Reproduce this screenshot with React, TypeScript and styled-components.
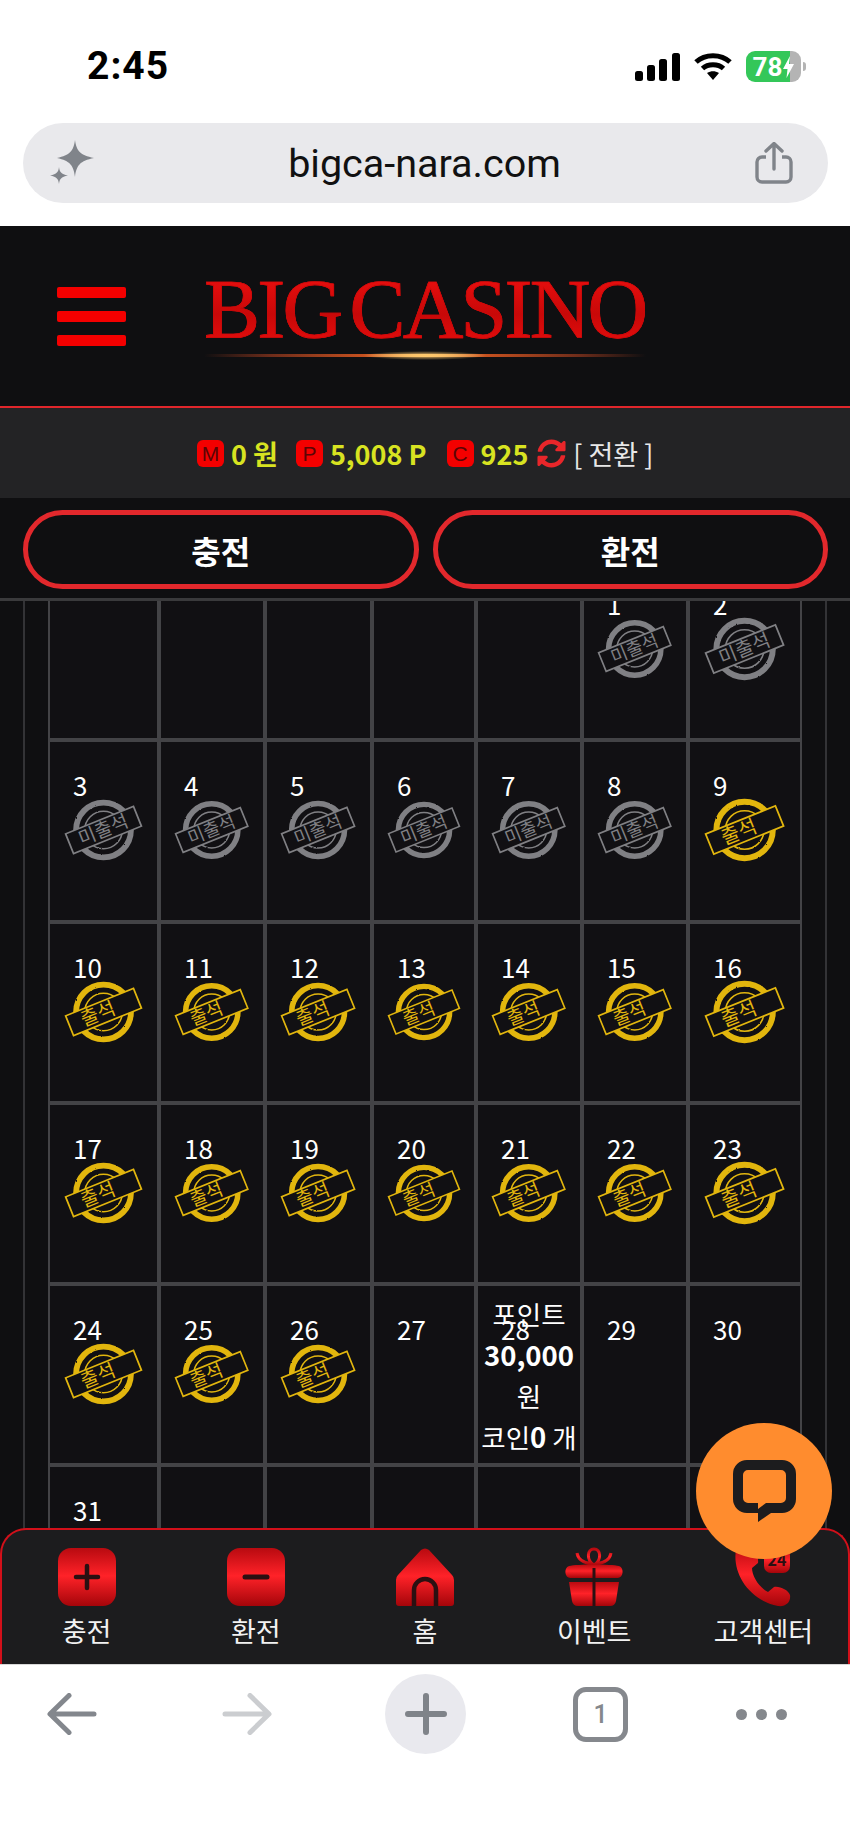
import React from "react";
import styled, { createGlobalStyle } from "styled-components";
import { FaSyncAlt } from "react-icons/fa";

const KR = `"Noto Sans CJK KR", "Noto Sans", sans-serif`;

const GlobalStyle = createGlobalStyle`
  html, body {
    margin: 0;
    padding: 0;
    background: #fff;
  }
  * {
    box-sizing: border-box;
  }
`;

const Page = styled.div`
  width: 850px;
  height: 1841px;
  display: flex;
  flex-direction: column;
  overflow: hidden;
  background: #fff;
  font-family: ${KR};
`;

/* phone chrome, top */
const StatusBar = styled.div`
  height: 123px;
  padding: 10px 49px 0 87px;
  display: flex;
  align-items: center;
  justify-content: space-between;
`;
const Time = styled.div`
  font-family: Roboto, sans-serif;
  font-weight: 700;
  font-size: 39px;
  line-height: 1;
  letter-spacing: 1px;
  color: #000;
`;
const StatusIcons = styled.div`
  display: flex;
  align-items: center;
  gap: 14px;
`;
const Battery = styled.div`
  position: relative;
  width: 55px;
  height: 31px;
  border-radius: 9px;
  background: linear-gradient(90deg, #34c759 0 80%, #b4b4b4 80% 100%);
  display: flex;
  align-items: center;
  justify-content: center;
  gap: 1px;
  color: #fff;
  font-family: Roboto, sans-serif;
  font-weight: 700;
  font-size: 26px;
  &::after {
    content: "";
    position: absolute;
    right: -5px;
    top: 11px;
    width: 3px;
    height: 9px;
    border-radius: 0 3px 3px 0;
    background: #b4b4b4;
  }
`;
const UrlBar = styled.div`
  height: 80px;
  margin: 0 22px 23px 23px;
  padding: 0 35px 0 27px;
  border-radius: 40px;
  background: #e9e9ec;
  display: flex;
  align-items: center;
  justify-content: space-between;
`;
const UrlText = styled.div`
  font-family: Roboto, sans-serif;
  font-size: 39.5px;
  color: #111;
`;

/* site header */
const Header = styled.header`
  height: 182px;
  padding: 0 0 0 57px;
  background: #0f0f11;
  border-bottom: 2px solid #e0262b;
  display: flex;
  align-items: flex-start;
  gap: 78px;
`;
const Burger = styled.div`
  margin-top: 61px;
  width: 69px;
  display: flex;
  flex-direction: column;
  gap: 13px;
`;
const BurgerBar = styled.span`
  display: block;
  height: 11px;
  border-radius: 2px;
  background: #f40000;
`;
const Logo = styled.div`
  margin-top: 42px;
  width: 442px;
  display: flex;
  flex-direction: column;
`;
const LogoText = styled.div`
  font-family: "Liberation Serif", serif;
  font-size: 84px;
  line-height: 84px;
  letter-spacing: -2.8px;
  word-spacing: -9px;
  white-space: nowrap;
  background: linear-gradient(180deg, #f01010 0%, #c80808 55%, #ea0e0e 100%);
  -webkit-background-clip: text;
  background-clip: text;
  color: transparent;
  -webkit-text-stroke: 0.7px #d40a0a;
`;
const LogoGlow = styled.div`
  position: relative;
  margin-top: 2px;
  height: 3px;
  background: linear-gradient(
    90deg,
    transparent 0%,
    #6d2c1a 15%,
    #c5501f 36%,
    #ffd27a 50%,
    #c5501f 64%,
    #6d2c1a 85%,
    transparent 100%
  );
  &::after {
    content: "";
    position: absolute;
    left: 160px;
    right: 160px;
    top: -3px;
    height: 9px;
    border-radius: 50%;
    background: radial-gradient(closest-side, #ffc76a, rgba(200, 80, 30, 0));
  }
`;

const BalanceBar = styled.div`
  height: 90px;
  padding-left: 197px;
  background: #232325;
  display: flex;
  align-items: center;
`;
const Badge = styled.span`
  width: 27px;
  height: 27px;
  border-radius: 6px;
  background: #f40000;
  color: #5a0505;
  font-family: "Liberation Sans", sans-serif;
  font-size: 21px;
  line-height: 27px;
  text-align: center;
`;
const Amount = styled.span<{ $gap: number }>`
  margin: 0 ${(p) => p.$gap}px 0 7px;
  color: #d8e321;
  font-size: 27px;
  font-weight: 700;
  line-height: 1;
  white-space: nowrap;
`;
const SwapLabel = styled.span`
  margin-left: 7px;
  color: #e8e8e8;
  font-size: 27px;
  line-height: 1;
  white-space: nowrap;
`;

const ActionRow = styled.div`
  height: 103px;
  padding: 12px 22px 0 23px;
  background: #0f0f11;
  border-bottom: 3px solid #3a3a3c;
  display: flex;
  gap: 14px;
`;
const ActionButton = styled.div`
  flex: 1;
  height: 79px;
  border: 5px solid #e2282c;
  border-radius: 40px;
  display: flex;
  align-items: center;
  justify-content: center;
  color: #fff;
  font-size: 32px;
  font-weight: 700;
`;

/* calendar, scrolled so the first week is cut by the top edge */
const Viewport = styled.div`
  position: relative;
  flex: 1;
  overflow: hidden;
  background: #0f0f11;
`;
const CalendarFrame = styled.div`
  height: 100%;
  margin: 0 23px;
  padding: 0 23px;
  border-left: 2px solid #333336;
  border-right: 2px solid #333336;
`;
const CalendarGrid = styled.div`
  margin-top: -40px;
  display: grid;
  grid-template-columns: 107px 102px 103px 100px 102px 102px 110px;
  grid-auto-rows: 177.25px;
  gap: 4px;
  background: #434346;
  border-left: 2px solid #434346;
  border-right: 2px solid #434346;
`;
const Cell = styled.div`
  position: relative;
  padding-top: 31px;
  background: #111013;
  display: flex;
  flex-direction: column;
`;
const DayNumber = styled.div`
  padding-left: 23px;
  height: 24px;
  color: #fff;
  font-size: 26px;
  line-height: 24px;
`;
const StampSvg = styled.svg`
  align-self: center;
  width: 72%;
  height: 66px;
  overflow: visible;
`;
const RewardOverlay = styled.div`
  position: absolute;
  inset: 0;
  display: flex;
  flex-direction: column;
  align-items: center;
  justify-content: center;
  color: #fff;
  font-size: 26.5px;
  line-height: 41px;
  white-space: nowrap;
`;
const Strong = styled.b`
  font-weight: 700;
  font-size: 27.5px;
`;

/* fixed bottom nav and chat bubble float above the calendar */
const BottomNav = styled.nav`
  position: absolute;
  left: 0;
  right: 0;
  bottom: 0;
  height: 136px;
  padding-top: 18px;
  border: 2px solid #d2101a;
  border-bottom: none;
  border-radius: 26px 26px 0 0;
  background: #1c1c1e;
  display: grid;
  grid-template-columns: repeat(5, 1fr);
`;
const NavItem = styled.div`
  display: flex;
  flex-direction: column;
  align-items: center;
  color: #f2f2f2;
  font-size: 27px;
  line-height: 1;
`;
const NavIcon = styled.svg`
  width: 58px;
  height: 58px;
  margin-bottom: 11px;
  overflow: visible;
`;
const HiddenDefs = styled.svg`
  position: absolute;
  width: 0;
  height: 0;
`;
const ChatButton = styled.div`
  position: absolute;
  right: 18px;
  bottom: 105px;
  width: 136px;
  height: 136px;
  border-radius: 50%;
  background: #ff8c2e;
  display: flex;
  align-items: center;
  justify-content: center;
`;

/* phone chrome, bottom */
const Toolbar = styled.div`
  height: 177px;
  padding: 9px 0 0 47px;
  border-top: 1px solid #d8d8d8;
  background: #fff;
  display: flex;
  align-items: flex-start;
`;
const ToolSlot = styled.div<{ $w: number; $left?: number }>`
  width: ${(p) => p.$w}px;
  height: 80px;
  margin-left: ${(p) => p.$left ?? 0}px;
  display: flex;
  align-items: center;
  justify-content: center;
`;
const PlusCircle = styled(ToolSlot)`
  border-radius: 50%;
  background: #e9e9ee;
`;
const TabCount = styled.div`
  width: 55px;
  height: 55px;
  border: 5px solid #85888d;
  border-radius: 13px;
  display: flex;
  align-items: center;
  justify-content: center;
  color: #85888d;
  font-family: Roboto, sans-serif;
  font-size: 25px;
  font-weight: 500;
`;
const Dots = styled.div`
  display: flex;
  gap: 9px;
`;
const Dot = styled.span`
  width: 11px;
  height: 11px;
  border-radius: 50%;
  background: #85888d;
`;

type StampKind = "absent" | "present";

const Stamp = ({ kind }: { kind: StampKind }) => {
  const color = kind === "present" ? "#e2b60e" : "#808084";
  return (
    <StampSvg viewBox="0 0 80 66">
      <g filter="url(#stampRough)">
        <circle cx="40" cy="33" r="28.5" fill="none" stroke={color} strokeWidth="6" />
        <circle cx="40" cy="33" r="19.5" fill="none" stroke={color} strokeWidth="1.6" />
      </g>
      <g transform="rotate(-22 40 33)">
        <rect x="2" y="22" width="76" height="22" fill="#111013" stroke={color} strokeWidth="1.8" />
        <text
          x={kind === "present" ? 34 : 40}
          y="39.5"
          textAnchor="middle"
          fill={color}
          fontFamily={KR}
          fontWeight="400"
          fontSize={kind === "present" ? 20 : 19.5}
        >
          {kind === "present" ? "출석" : "미출석"}
        </text>
      </g>
    </StampSvg>
  );
};

const days: (number | null)[] = [
  null, null, null, null, null,
  ...Array.from({ length: 31 }, (_, i) => i + 1),
  null, null, null, null, null, null,
];

const stampFor = (day: number): StampKind | null => {
  if (day <= 8) return "absent";
  if (day <= 26) return "present";
  return null;
};

const Sparkle = () => (
  <svg width="44" height="46" viewBox="0 0 44 46" fill="#80848a">
    <path d="M25 0 C26.5 11 30 15 44 18 C30 21 26.5 25 25 37 C23.5 25 20 21 7 18 C20 15 23.5 11 25 0Z" />
    <path d="M9 27 C9.6 32 11 34 18 35.5 C11 37 9.6 39 9 44 C8.4 39 7 37 0 35.5 C7 34 8.4 32 9 27Z" />
  </svg>
);

const ShareIcon = () => (
  <svg width="38" height="42" viewBox="0 0 38 42" fill="none" stroke="#80848a" strokeWidth="3.4">
    <path d="M11 15 H7 a5 5 0 0 0 -5 5 V35 a5 5 0 0 0 5 5 H31 a5 5 0 0 0 5 -5 V20 a5 5 0 0 0 -5 -5 H27" />
    <path d="M19 27 V2 M11 9 L19 1.5 L27 9" strokeLinecap="round" />
  </svg>
);

const SignalIcon = () => (
  <svg width="45" height="28" viewBox="0 0 45 28" fill="#000">
    <rect x="0" y="18" width="8" height="10" rx="2.5" />
    <rect x="12" y="12" width="8" height="16" rx="2.5" />
    <rect x="24" y="6" width="8" height="22" rx="2.5" />
    <rect x="37" y="0" width="8" height="28" rx="2.5" />
  </svg>
);

const WifiIcon = () => (
  <svg width="38" height="28" viewBox="0 0 38 28" fill="none" stroke="#000" strokeWidth="5">
    <path d="M2 9 C11 0.5 27 0.5 36 9" />
    <path d="M8.5 15.5 C14 10.5 24 10.5 29.5 15.5" />
    <path d="M13 20 L19 27 L25 20 C21 17.5 17 17.5 13 20Z" fill="#000" stroke="none" />
  </svg>
);

const BoltIcon = () => (
  <svg width="11" height="22" viewBox="0 0 11 22" fill="#fff">
    <path d="M7 0 L0 13 H4.5 L3.5 22 L11 8 H6 Z" />
  </svg>
);

const ChatIcon = () => (
  <svg width="63" height="62" viewBox="0 0 63 62" fill="#1c1c1e" fillRule="evenodd">
    <path d="M14 0 H49 A14 14 0 0 1 63 14 V39 A14 14 0 0 1 49 53 H38 L25 62 V53 H14 A14 14 0 0 1 0 39 V14 A14 14 0 0 1 14 0Z M15 10 H48 A5 5 0 0 1 53 15 V38 A5 5 0 0 1 48 43 H33 L25 49 V43 H15 A5 5 0 0 1 10 38 V15 A5 5 0 0 1 15 10Z" />
  </svg>
);

const shine = "url(#navShine)";
const dark = "#2a1012";

const PlusGlyph = () => (
  <NavIcon viewBox="0 0 58 58">
    <rect width="58" height="58" rx="13" fill={shine} />
    <path d="M29 18 V40 M18 29 H40" stroke={dark} strokeWidth="4.5" strokeLinecap="round" />
  </NavIcon>
);

const MinusGlyph = () => (
  <NavIcon viewBox="0 0 58 58">
    <rect width="58" height="58" rx="13" fill={shine} />
    <path d="M18 29 H40" stroke={dark} strokeWidth="5" strokeLinecap="round" />
  </NavIcon>
);

const HomeGlyph = () => (
  <NavIcon viewBox="0 0 58 58">
    <path
      d="M25 2 Q29 -1 33 2 L56 27 Q58 29 58 32 V55 Q58 58 55 58 H3 Q0 58 0 55 V32 Q0 29 2 27 Z"
      fill={shine}
    />
    <path d="M18 58 V42 a11 11 0 0 1 22 0 V58" fill="none" stroke={dark} strokeWidth="4.5" />
  </NavIcon>
);

const GiftGlyph = () => (
  <NavIcon viewBox="0 0 58 58">
    <path
      d="M29 17 C21 12 22 1 29 1 C36 1 37 12 29 17 M27 16 C18 15 13 11 12 5 M31 16 C40 15 45 11 46 5"
      fill="none"
      stroke={shine}
      strokeWidth="3"
    />
    <path d="M4 18 C12 16 46 16 54 18 C60 20 58 31 52 30 H6 C0 31 -2 20 4 18Z" fill={shine} />
    <path d="M4 34 H54 L51 53 Q50 58 45 58 H13 Q8 58 7 53 Z" fill={shine} />
    <path d="M29 20 V58" stroke={dark} strokeWidth="3" />
  </NavIcon>
);

const PhoneGlyph = () => (
  <NavIcon viewBox="0 0 58 58">
    <rect x="30" y="0" width="26" height="25" rx="7" fill={shine} />
    <text x="43" y="18" textAnchor="middle" fontSize="16" fontWeight="700" fontFamily={KR} fill={dark}>
      24
    </text>
    <path
      d="M2 2 C-2 24 14 52 44 58 C52 59 57 54 56 47 C54 42 46 38 40 39 L34 44 C26 40 18 29 18 20 L24 15 C25 8 20 -2 10 -3 C6 -3 3 -1 2 2Z"
      fill={shine}
    />
  </NavIcon>
);

const navItems = [
  { label: "충전", icon: <PlusGlyph /> },
  { label: "환전", icon: <MinusGlyph /> },
  { label: "홈", icon: <HomeGlyph /> },
  { label: "이벤트", icon: <GiftGlyph /> },
  { label: "고객센터", icon: <PhoneGlyph /> },
];

const App: React.FC = () => {
  return (
    <Page>
      <GlobalStyle />
      <HiddenDefs>
        <defs>
          <filter id="stampRough" x="-5%" y="-5%" width="110%" height="110%">
            <feTurbulence type="fractalNoise" baseFrequency="0.3" numOctaves="2" seed="4" />
            <feDisplacementMap in="SourceGraphic" scale="1.8" />
          </filter>
          <linearGradient id="navShine" x1="0" y1="0" x2="0" y2="1">
            <stop offset="0" stopColor="#b80a10" />
            <stop offset="0.48" stopColor="#ff2228" />
            <stop offset="1" stopColor="#a4050a" />
          </linearGradient>
        </defs>
      </HiddenDefs>
      <StatusBar>
        <Time>2:45</Time>
        <StatusIcons>
          <SignalIcon />
          <WifiIcon />
          <Battery>
            78
            <BoltIcon />
          </Battery>
        </StatusIcons>
      </StatusBar>
      <UrlBar>
        <Sparkle />
        <UrlText>bigca-nara.com</UrlText>
        <ShareIcon />
      </UrlBar>

      <Header>
        <Burger>
          <BurgerBar />
          <BurgerBar />
          <BurgerBar />
        </Burger>
        <Logo>
          <LogoText>BIG CASINO</LogoText>
          <LogoGlow />
        </Logo>
      </Header>

      <BalanceBar>
        <Badge>M</Badge>
        <Amount $gap={18}>0 원</Amount>
        <Badge>P</Badge>
        <Amount $gap={20}>5,008 P</Amount>
        <Badge>C</Badge>
        <Amount $gap={9}>925</Amount>
        <FaSyncAlt size={29} color="#e8262a" />
        <SwapLabel>[ 전환 ]</SwapLabel>
      </BalanceBar>

      <ActionRow>
        <ActionButton>충전</ActionButton>
        <ActionButton>환전</ActionButton>
      </ActionRow>

      <Viewport>
        <CalendarFrame>
          <CalendarGrid>
            {days.map((day, i) => {
              const kind = day ? stampFor(day) : null;
              return (
                <Cell key={i}>
                  {day && <DayNumber>{day}</DayNumber>}
                  {kind && <Stamp kind={kind} />}
                  {day === 28 && (
                    <RewardOverlay>
                      <span>포인트</span>
                      <Strong>30,000</Strong>
                      <span>원</span>
                      <span>
                        코인<Strong>0</Strong> 개
                      </span>
                    </RewardOverlay>
                  )}
                </Cell>
              );
            })}
          </CalendarGrid>
        </CalendarFrame>

        <BottomNav>
          {navItems.map((item) => (
            <NavItem key={item.label}>
              {item.icon}
              {item.label}
            </NavItem>
          ))}
        </BottomNav>

        <ChatButton>
          <ChatIcon />
        </ChatButton>
      </Viewport>

      <Toolbar>
        <ToolSlot $w={50}>
          <svg width="50" height="42" viewBox="0 0 50 42" fill="none" stroke="#83878d" strokeWidth="5" strokeLinecap="round" strokeLinejoin="round">
            <path d="M47 21 H4 M22 2.5 L3 21 L22 39.5" />
          </svg>
        </ToolSlot>
        <ToolSlot $w={50} $left={125}>
          <svg width="50" height="42" viewBox="0 0 50 42" fill="none" stroke="#cbcdd0" strokeWidth="5" strokeLinecap="round" strokeLinejoin="round">
            <path d="M3 21 H46 M28 2.5 L47 21 L28 39.5" />
          </svg>
        </ToolSlot>
        <PlusCircle $w={81} $left={113}>
          <svg width="42" height="42" viewBox="0 0 42 42" fill="none" stroke="#7f8389" strokeWidth="6" strokeLinecap="round">
            <path d="M21 3 V39 M3 21 H39" />
          </svg>
        </PlusCircle>
        <ToolSlot $w={55} $left={107}>
          <TabCount>1</TabCount>
        </ToolSlot>
        <ToolSlot $w={51} $left={108}>
          <Dots>
            <Dot />
            <Dot />
            <Dot />
          </Dots>
        </ToolSlot>
      </Toolbar>
    </Page>
  );
};

export default App;
